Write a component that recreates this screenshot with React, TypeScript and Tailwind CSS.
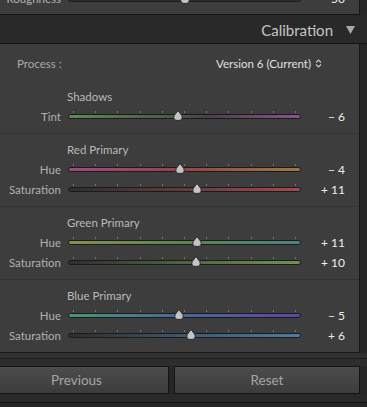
import React from 'react';

const font = { fontFamily: 'Lato, "Open Sans", sans-serif' };

type SliderProps = { value: number; track: string };

// thumb position: -100..100 mapped to the 233px track
function Slider({ value, track }: SliderProps) {
  const left = ((value + 100) / 200) * 233;
  return (
    <div className="relative w-[233px] h-[20px] shrink-0">
      <div className="absolute left-[5px] right-[5px] top-[5px] flex justify-between">
        {Array.from({ length: 11 }).map((_, i) => (
          <div key={i} className="w-px h-[2px] bg-[#737373]" />
        ))}
      </div>
      <div className={`absolute left-0 right-0 top-[8px] h-[5px] rounded-full border border-[#1b1b1b] ${track}`} />
      <svg
        className="absolute top-[4px]"
        style={{ left: left - 6 }}
        width="12"
        height="11"
        viewBox="0 0 12 11"
      >
        <path d="M6 0.5 L9.8 5.5 Q11.5 10.5 6 10.5 Q0.5 10.5 2.2 5.5 Z" fill="#c4c4c4" stroke="#2a2a2a" strokeWidth="1" />
      </svg>
    </div>
  );
}

function Row({ label, value, track, display }: { label: string; value: number; track: string; display: string }) {
  return (
    <div className="flex items-center h-[20px]">
      <div className="w-[61px] text-right text-[11.5px] text-[#b0b0b0] translate-y-[1px]">{label}</div>
      <div className="w-[7px]" />
      <Slider value={value} track={track} />
      <div className="w-[44px] text-right text-[12px] text-[#ededed] translate-y-[1px]">{display}</div>
    </div>
  );
}

const sections = [
  {
    title: 'Red Primary',
    rows: [
      { label: 'Hue', value: -4, display: '\u2212 4', track: 'bg-[linear-gradient(to_right,#9c4a82,#94444a_50%,#9a7a44)]' },
      { label: 'Saturation', value: 11, display: '+ 11', track: 'bg-[linear-gradient(to_right,#2e2e2e,#5e3a3c_45%,#a8484e)]' },
    ],
  },
  {
    title: 'Green Primary',
    rows: [
      { label: 'Hue', value: 11, display: '+ 11', track: 'bg-[linear-gradient(to_right,#86904e,#58864e_50%,#4a8282)]' },
      { label: 'Saturation', value: 10, display: '+ 10', track: 'bg-[linear-gradient(to_right,#2e2e2e,#4a603e_45%,#6e9454)]' },
    ],
  },
  {
    title: 'Blue Primary',
    rows: [
      { label: 'Hue', value: -5, display: '\u2212 5', track: 'bg-[linear-gradient(to_right,#489478,#48689a_50%,#6044a4)]' },
      { label: 'Saturation', value: 6, display: '+ 6', track: 'bg-[linear-gradient(to_right,#2e2e2e,#3c5468_45%,#4a7ea2)]' },
    ],
  },
];

export default function App() {
  return (
    <div className="w-[367px] h-[407px] overflow-hidden bg-[#262626] flex flex-col" style={font}>
      {/* tail of the panel above */}
      <div className="h-[15px] flex shrink-0">
        <div className="w-[360px] h-[15px] bg-[#3d3d3d] border-r border-b border-[#171717] overflow-hidden">
          <div className="-mt-[11px] flex items-center h-[20px]">
            <div className="w-[61px] text-right text-[11.5px] text-[#b0b0b0]">Roughness</div>
            <div className="w-[7px]" />
            <Slider value={0} track="bg-[#2e2e2e]" />
            <div className="w-[44px] text-right text-[12px] text-[#ededed]">50</div>
          </div>
        </div>
      </div>

      {/* header */}
      <div className="h-[29px] shrink-0 bg-[#292929] border-b border-[#151515] flex items-center justify-end pr-[12px]">
        <span className="text-[15px] text-[#c6c6c6] mr-[13px] translate-y-[1px]">Calibration</span>
        <svg width="9" height="9" viewBox="0 0 9 9">
          <path d="M0 1 L9 1 L4.5 9 Z" fill="#a9a9a9" />
        </svg>
      </div>

      {/* panel */}
      <div className="w-[360px] h-[309px] shrink-0 bg-[#3d3d3d] border-r border-b border-[#171717] flex flex-col">
        <div className="h-[37px] flex items-center justify-between pl-[17px] pr-[37px]">
          <span className="text-[11.5px] text-[#aaaaaa] translate-y-[1px]">Process :</span>
          <span className="flex items-center gap-[4px] text-[11.5px] text-[#e0e0e0] translate-y-[1px]">
            Version 6 (Current)
            <svg width="7" height="9" viewBox="0 0 7 9">
              <path d="M1 3.5 L3.5 1 L6 3.5" fill="none" stroke="#c8c8c8" strokeWidth="1.2" />
              <path d="M1 5.5 L3.5 8 L6 5.5" fill="none" stroke="#c8c8c8" strokeWidth="1.2" />
            </svg>
          </span>
        </div>

        <div className="pt-[7px] pb-[7px] border-b border-[#333333]">
          <div className="h-[16px] pl-[67px] flex items-center text-[11.5px] text-[#bababa] translate-y-[1px]">Shadows</div>
          <div className="mt-[2px]">
            <Row
              label="Tint"
              value={-6}
              display={'\u2212 6'}
              track="bg-[linear-gradient(to_right,#5e8a55,#485046_52%,#484048_60%,#8e5290)]"
            />
          </div>
        </div>

        {sections.map((s, i) => (
          <div key={s.title} className={`pt-[7px] ${i < 2 ? 'pb-[7px] border-b border-[#333333]' : 'pb-[6px]'}`}>
            <div className="h-[16px] pl-[67px] flex items-center text-[11.5px] text-[#bababa] translate-y-[1px]">{s.title}</div>
            <div className="mt-[2px]">
              {s.rows.map((r) => (
                <Row key={r.label} label={r.label} value={r.value} track={r.track} display={r.display} />
              ))}
            </div>
          </div>
        ))}
      </div>

      {/* bottom buttons */}
      <div className="h-[6px] shrink-0 bg-[#313131] border-b border-[#1c1c1c]" />
      <div className="h-[7px] shrink-0 bg-[#2d2d2d]" />
      <div className="flex gap-[5px] shrink-0 h-[28px]">
        <button className="-ml-[16px] w-[185px] h-[28px] border border-[#141414] bg-[linear-gradient(to_bottom,#4c4c4c,#3c3c3c)] text-[13.5px] text-[#a6a6a6]">
          Previous
        </button>
        <button className="w-[186px] h-[28px] border border-[#141414] bg-[linear-gradient(to_bottom,#4c4c4c,#3c3c3c)] text-[13.5px] text-[#a6a6a6]">
          Reset
        </button>
      </div>
      <div className="h-[9px] shrink-0 bg-[#292929] border-b border-[#111111]" />
    </div>
  );
}
